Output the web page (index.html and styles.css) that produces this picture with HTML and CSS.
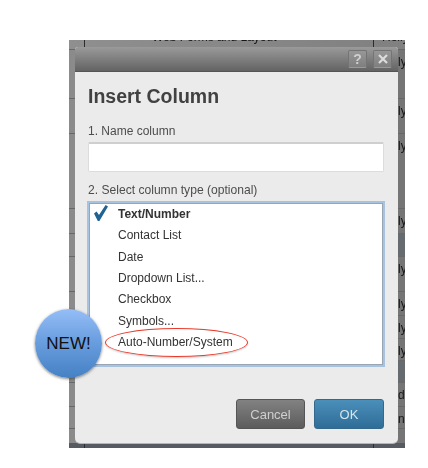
FILE: index.html
```html
<!DOCTYPE html>
<html lang="en">
<head>
<meta charset="utf-8">
<title>Insert Column</title>
<link rel="stylesheet" href="styles.css">
</head>
<body>
<div class="backdrop">
  <div class="sheet">
    <div class="row row-first"><span class="cell-a"></span><span class="cell-b">Web Forms and Layout</span><span class="cell-c cell-top">Holly</span></div>
    <div class="row"><span class="cell-a"></span><span class="cell-b"></span><span class="cell-c">ly</span></div>
    <div class="row"><span class="cell-a"></span><span class="cell-b"></span><span class="cell-c">ly</span></div>
    <div class="row"><span class="cell-a"></span><span class="cell-b"></span><span class="cell-c">ly</span></div>
    <div class="row"><span class="cell-a"></span><span class="cell-b"></span><span class="cell-c">ly</span></div>
    <div class="row row-dark"></div>
    <div class="row"><span class="cell-a"></span><span class="cell-b"></span><span class="cell-c">ly</span></div>
    <div class="row"><span class="cell-a"></span><span class="cell-b"></span><span class="cell-c">ly</span></div>
    <div class="row"><span class="cell-a"></span><span class="cell-b"></span><span class="cell-c">ly</span></div>
    <div class="row"><span class="cell-a"></span><span class="cell-b"></span><span class="cell-c">ly</span></div>
    <div class="row row-dark"></div>
    <div class="row"><span class="cell-a"></span><span class="cell-b"></span><span class="cell-c">ds</span></div>
    <div class="row"><span class="cell-a"></span><span class="cell-b"></span><span class="cell-c">n</span></div>
    <div class="row"></div>
    <div class="row row-last"><span class="cell-a"></span><span class="cell-b"></span></div>
  </div>

  <div class="dialog">
    <div class="titlebar">
      <span class="tool-btn">?</span>
      <span class="tool-btn">
        <svg class="x-icon" viewBox="0 0 12 12" aria-hidden="true"><path d="M2 2 L10 10 M10 2 L2 10"/></svg>
      </span>
    </div>
    <div class="content">
      <h1 class="heading">Insert Column</h1>
      <label class="field-label">1. Name column</label>
      <div class="text-input"></div>
      <label class="field-label field-label-second">2. Select column type (optional)</label>
      <ul class="type-list">
        <li class="type-item type-selected">
          <svg class="check" viewBox="0 0 14 16" aria-hidden="true"><path d="M0 8.5 L2.6 6.6 L5 10 L11.6 0 L14 1.4 L5.4 16 L3.8 16 Z"/></svg>
          Text/Number
        </li>
        <li class="type-item">Contact List</li>
        <li class="type-item">Date</li>
        <li class="type-item">Dropdown List...</li>
        <li class="type-item">Checkbox</li>
        <li class="type-item">Symbols...</li>
        <li class="type-item">Auto-Number/System</li>
      </ul>
      <div class="actions">
        <button class="btn btn-cancel" type="button">Cancel</button>
        <button class="btn btn-ok" type="button">OK</button>
      </div>
    </div>
  </div>

  <div class="highlight"></div>
  <div class="badge">NEW!</div>
</div>
</body>
</html>
```
FILE: styles.css
```css
* { box-sizing: border-box; }

html, body {
  margin: 0;
  padding: 0;
  background: #fff;
}

body {
  height: 468px;
  overflow: hidden;
  padding: 40px 0 0 69px;
  font-family: "Liberation Sans", Arial, sans-serif;
}

.backdrop {
  position: relative;
  width: 336px;
  height: 408px;
  padding: 7px 7px 5px 6px;
  background: #7a7a7a;
}

.sheet {
  position: absolute;
  inset: 0;
  display: grid;
  grid-template-rows: 9px 49px 35px 75px 25px 23px 35px 24px 23px 22px 22px 24px 22px 15px 5px;
  overflow: hidden;
  font-size: 12px;
  line-height: 12px;
  color: #161616;
  filter: blur(0.35px);
}

.row {
  display: grid;
  grid-template-columns: 16px 289px 31px;
  border-top: 1px solid #686868;
  background: linear-gradient(90deg, #8b8b8b 0, #8b8b8b 8px, #777 300px, #757575 100%);
  overflow: hidden;
}

.row-first {
  border-top: 0;
  background: linear-gradient(90deg, #8f8f8f, #808080);
}

.row-first .cell-b { margin-top: -9px; padding-left: 67px; }
.row-first .cell-c { margin-top: -9px; padding-top: 0; }

.row-dark {
  background: linear-gradient(90deg, #8b8b8b 0, #8b8b8b 8px, #666b70 300px, #666b70 100%);
}

.row-last {
  border-top: 0;
  background: #555b61;
}

.cell-a { border-right: 1px solid #2c2c2c; visibility: hidden; }
.row-first .cell-a, .row-last .cell-a { visibility: visible; }

.cell-b { border-right: 1px solid transparent; white-space: nowrap; }
.row-first .cell-b, .row-last .cell-b { border-right-color: #2c2c2c; }

.cell-c {
  padding: 6px 0 0 24px;
  white-space: nowrap;
}

.cell-top { padding-left: 8px; }

.dialog {
  position: relative;
  height: 396px;
  display: flex;
  flex-direction: column;
  border-radius: 3px 3px 5px 5px;
  background: #ebebeb;
  box-shadow: 0 1px 0 #b5b5b5;
  filter: blur(0.35px);
}

.titlebar {
  flex: none;
  height: 25px;
  display: flex;
  justify-content: flex-end;
  gap: 6px;
  padding: 3px 6px 0 0;
  border-radius: 3px 3px 0 0;
  background: linear-gradient(#9a9a9a, #636363);
  border-bottom: 1px solid #555;
}

.tool-btn {
  width: 19px;
  height: 18px;
  display: flex;
  align-items: center;
  justify-content: center;
  border: 1px solid #747474;
  border-bottom-color: #9a9a9a;
  border-radius: 2px;
  background: linear-gradient(#979797, #7f7f7f);
  color: #cfcfcf;
  font-size: 14px;
  font-weight: bold;
}

.x-icon {
  width: 12px;
  height: 12px;
  fill: none;
  stroke: #dcdcdc;
  stroke-width: 2.2;
}

.content {
  flex: 1;
  padding: 13px 14px 0 13px;
}

.heading {
  margin: 0;
  font-size: 19.5px;
  line-height: 22px;
  font-weight: bold;
  color: #414141;
}

.field-label {
  display: block;
  margin-top: 17px;
  font-size: 12px;
  line-height: 14px;
  color: #4d4d4d;
}

.field-label-second {
  margin-top: 11px;
  font-size: 12.1px;
}

.text-input {
  height: 30px;
  margin-top: 4px;
  border: 1px solid #dcdcdc;
  border-top: 2px solid #cfcfcf;
  border-radius: 2px;
  background: #fff;
}

.type-list {
  list-style: none;
  height: 166px;
  margin: 4px -1px 0;
  padding: 1px 0 0 29px;
  border: 2px solid #a7c3e0;
  outline: 1px solid #98a5b4;
  outline-offset: -3px;
  background: #fff;
  font-size: 12px;
  color: #333;
}

.type-item {
  position: relative;
  height: 21.33px;
  line-height: 21.33px;
}

.type-selected { font-weight: bold; }

.check {
  position: absolute;
  left: -24px;
  top: 1px;
  width: 14px;
  height: 16px;
  fill: #1f6293;
}

.actions {
  display: flex;
  justify-content: flex-end;
  gap: 9px;
  margin-top: 32px;
}

.btn {
  height: 30px;
  padding: 0;
  border: 1px solid #555;
  border-radius: 3px;
  font-family: inherit;
  font-size: 13px;
}

.btn-cancel {
  width: 69px;
  background: linear-gradient(#828282, #5c5c5c);
  color: #cfcfcf;
}

.btn-ok {
  width: 70px;
  border-color: #34698c;
  background: linear-gradient(#4a8fba, #2f6d98);
  color: #d6e4ec;
}

.highlight {
  position: absolute;
  left: 36px;
  top: 288px;
  width: 143px;
  height: 29px;
  border: 1px solid #e8392c;
  border-radius: 50%;
  box-shadow: 0 1px 2px rgba(0, 0, 0, 0.2);
}

.badge {
  position: absolute;
  left: -34px;
  top: 269px;
  width: 67px;
  height: 69px;
  display: flex;
  align-items: center;
  justify-content: center;
  border-radius: 50%;
  background: linear-gradient(#95bef7, #6b9fe0 45%, #4581c4);
  box-shadow: 0 1px 3px rgba(0, 0, 0, 0.5);
  font-size: 17px;
  color: #101010;
}
```
